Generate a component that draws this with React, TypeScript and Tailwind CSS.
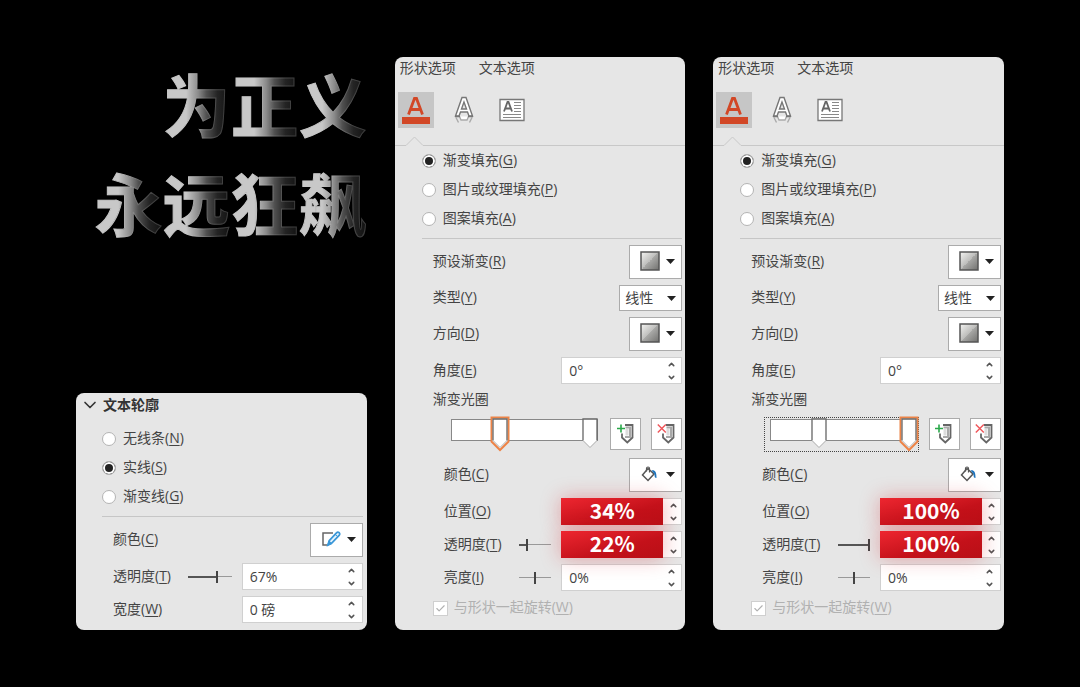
import React, { useState } from 'react';
import { Check, ChevronDown, ChevronUp } from 'lucide-react';

const Label = ({ text, hotkey, htmlFor }: { text: string; hotkey?: string; htmlFor?: string }) => (
  <label htmlFor={htmlFor} className="pb-[2px] leading-5 whitespace-nowrap">
    {text}
    {hotkey && <>(<u className="underline-offset-2">{hotkey}</u>)</>}
  </label>
);

const RadioRow = ({ id, name, text, hotkey, checked }: { id: string; name: string; text: string; hotkey: string; checked?: boolean }) => (
  <div className="flex h-[29px] items-center gap-[7px]">
    <input
      type="radio"
      id={id}
      name={name}
      defaultChecked={checked}
      className="size-[14px] shrink-0 appearance-none rounded-full border border-[#b4b4b4] bg-white checked:bg-[#222] checked:shadow-[inset_0_0_0_2px_white]"
    />
    <Label text={text} hotkey={hotkey} htmlFor={id} />
  </div>
);

const Row = ({ children, indent }: { children: React.ReactNode; indent?: boolean }) => (
  <div className={indent ? 'flex items-center justify-between pl-[22px]' : 'flex items-center justify-between pl-[11px]'}>
    {children}
  </div>
);

const Arrow = () => (
  <svg width="9" height="5" viewBox="0 0 9 5" className="pointer-events-none">
    <path d="M0 0h9L4.5 5z" fill="#222" />
  </svg>
);

const DropButton = ({ label, children }: { label: string; children: React.ReactNode }) => (
  <button type="button" aria-label={label} className="flex h-[34px] w-[53px] items-center justify-between border border-[#ababab] bg-white pr-[6px] pb-[2px] pl-[10px]">
    {children}
    <Arrow />
  </button>
);

const Swatch = ({ id }: { id: string }) => (
  <svg width="20" height="20" viewBox="0 0 20 20">
    <defs>
      <linearGradient id={id} x1="0" y1="0" x2="1" y2="1">
        <stop offset="0" stopColor="#f4f4f2" />
        <stop offset="0.5" stopColor="#bdbdbb" />
        <stop offset="0.5" stopColor="#a9a9a7" />
        <stop offset="1" stopColor="#70706e" />
      </linearGradient>
    </defs>
    <rect x="1" y="1" width="18" height="18" fill={`url(#${id})`} stroke="#555" strokeWidth="1.5" />
  </svg>
);

const PenIcon = () => (
  <svg width="20" height="16" viewBox="0 0 20 16" fill="none">
    <path d="M12 2H2v12h4" stroke="#666" strokeWidth="1.5" />
    <path d="M7 14l1.2-4.4 7.3-7.8c.8-.8 1.8-.9 2.6-.2s.8 1.8 0 2.7l-7.3 7.7z" fill="#e8f4fc" stroke="#3a97d8" strokeWidth="1.8" />
    <path d="M6.5 14.5L8 10l3 2.6zM14 3.2L17 6" fill="#3a97d8" stroke="#3a97d8" />
  </svg>
);

const BucketIcon = () => (
  <svg width="19" height="16" viewBox="0 0 19 16" fill="none">
    <path d="M8 2.5L14 8l-6 6.5L2.500 9z" fill="#fff" stroke="#555" strokeWidth="1.5" />
    <path d="M6.5 5.500v-3c0-2 3-2 3 0v4" stroke="#555" strokeWidth="1.2" />
    <path d="M11.5 4.5c3-.8 5.200 1 5 7.500-1.500 0-2-.8-2-4z" fill="#1e74bd" />
  </svg>
);

const StopIcon = ({ kind }: { kind: 'add' | 'remove' }) => (
  <svg width="20" height="22" viewBox="0 0 20 22" fill="none">
    <path d="M9 2h7.5v12.5l-5.200 5-5.300-5v-4" stroke="#666" strokeWidth="1.8" />
    <path d="M9.5 4.500H14V14H9" stroke="#a8a8a8" strokeWidth="2" />
    <path d="M11 6v6.500" stroke="#ddd" strokeWidth="3" />
    {kind === 'add' ? (
      <path d="M5 1.5v8M1 5.5h8" stroke="#2aa84a" strokeWidth="1.6" />
    ) : (
      <path d="M.8 1.5l8 8M8.8 1.5l-8 8" stroke="#f0555a" strokeWidth="1.4" />
    )}
  </svg>
);

const Spin = ({ id, value, big }: { id: string; value: string; big?: boolean }) => {
  const [text, setText] = useState(value);
  return (
    <div className="flex h-[27px] w-[121px] border border-[#d0d0d0] bg-white">
      <input
        id={id}
        type="text"
        value={text}
        onChange={e => setText(e.target.value)}
        className={
          big
            ? "relative z-10 -my-px -ml-px w-[102px] min-w-0 shrink-0 bg-linear-to-br from-[#ee2630] via-[#c4111a] via-60% to-[#b90f16] pb-px text-center font-['Noto_Sans_CJK_SC',sans-serif] text-[21px] font-bold text-white shadow-[0_0_20px_rgba(215,25,35,0.35)]"
            : 'min-w-0 flex-1 bg-transparent pl-[7px]'
        }
      />
      <div className="flex w-5 shrink-0 flex-col items-center justify-center gap-1 text-[#555]">
        <button type="button" aria-label="增加"><ChevronUp size={9} strokeWidth={4} className="block" /></button>
        <button type="button" aria-label="减少"><ChevronDown size={9} strokeWidth={4} className="block" /></button>
      </div>
    </div>
  );
};

const Range = ({ label, value, wide, filled }: { label: string; value: number; wide?: boolean; filled?: boolean }) => {
  const [pos, setPos] = useState(value);
  return (
    <div className={wide ? 'relative flex h-3 w-11 items-center' : 'relative flex h-3 w-8 items-center'}>
      <div className="h-px w-full bg-[#999]" />
      {filled && <div className="absolute left-0 h-[2px] bg-[#555]" style={{ width: `${pos}%` }} />}
      <input
        type="range"
        aria-label={label}
        min={0}
        max={100}
        value={pos}
        onChange={e => setPos(Number(e.target.value))}
        className="absolute inset-0 h-3 w-full appearance-none bg-transparent [&::-webkit-slider-thumb]:h-3 [&::-webkit-slider-thumb]:w-[2px] [&::-webkit-slider-thumb]:appearance-none [&::-webkit-slider-thumb]:bg-[#444]"
      />
    </div>
  );
};

const GradientStop = ({ at, active }: { at: number; active: boolean }) => (
  <button
    type="button"
    aria-label={`渐变光圈 ${at}%`}
    className="absolute -top-[4px] h-9 w-5"
    style={{ left: `${Math.round(at * 1.37) - 9}px` }}
  >
    <svg width="20" height="36" viewBox="0 0 20 36" fill="none">
      {active && <path d="M1.5 1.5h17v24L10 34l-8.5-8.5z" fill="#fff" stroke="#ec8347" strokeWidth="2" />}
      <path d="M3 3h14v21.5l-7 7-7-7z" fill="#fff" />
      <path d="M3 24.5V3h14v21.5" stroke="#666" strokeWidth="1.3" />
      <path d="M3 24.5l7 7 7-7" stroke="#aaa" />
    </svg>
  </button>
);

const GlyphTabs = () => (
  <div className="mt-[15px] flex gap-3 pl-[3px]">
    <button type="button" aria-label="文本填充与轮廓" className="flex size-9 items-center justify-center bg-[#c6c6c6]">
      <svg width="30" height="30" viewBox="0 0 30 30" fill="none">
        <path d="M7.5 19.5l6-16h2l6 16M10 14.500h9" stroke="#d24726" strokeWidth="2.8" />
        <path d="M1 22h28v7H1z" fill="#d24726" />
      </svg>
    </button>
    <button type="button" aria-label="文字效果" className="flex size-9 items-center justify-center">
      <svg width="20" height="28" viewBox="0 0 20 28" fill="none" strokeWidth="1.4">
        <path d="M1.5 20L8 1.5h4L18.500 20H15l-1.500-4h-7L5 20z" fill="#fff" stroke="#777" />
        <path d="M10 6l-2.500 7h5z" fill="#e6e6e6" stroke="#777" />
        <path d="M2 21.500l2.500 5M18 21.500l-2.500 5M5.500 20.500L7 24h6l1.500-3.500" fill="#fff" stroke="#aaa" />
        <path d="M1 20.500h5M14 20.500h5" stroke="#777" />
      </svg>
    </button>
    <button type="button" aria-label="文本框" className="flex size-9 items-center justify-center">
      <svg width="26" height="24" viewBox="0 0 26 24" fill="none">
        <path d="M1 1.5h24v21H1z" fill="#fff" stroke="#777" strokeWidth="1.3" />
        <path d="M5 13.5L8.500 4h1l3.500 9.500M6.500 10.500h5" stroke="#666" strokeWidth="1.8" />
        <path d="M15 4.500h7M15 7.500h7M15 10.500h7M15 13.500h7M4 16.500h18M4 19.500h18" stroke="#888" />
      </svg>
    </button>
  </div>
);

const FillPanel = ({ id, position, transparency, active }: { id: string; position: string; transparency: number; active: number }) => (
  <section className="overflow-hidden rounded-lg bg-[#e6e6e6] pb-[11px]">
    <nav className="flex h-5 items-center gap-[23px] pl-[5px]">
      <button type="button">形状选项</button>
      <button type="button">文本选项</button>
    </nav>
    <GlyphTabs />
    <div className="mt-2 flex h-[10px] items-end">
      <div className="h-px w-[11px] bg-[#c8c8c8]" />
      <svg width="17" height="10" viewBox="0 0 17 10" fill="none">
        <path d="M0 9.5L8.5 1 17 9.5" stroke="#c8c8c8" />
      </svg>
      <div className="h-px flex-1 bg-[#c8c8c8]" />
    </div>

    <div className="pr-[3px] pl-[27px]">
      <RadioRow id={`${id}-grad`} name={`${id}-fill`} text="渐变填充" hotkey="G" checked />
      <RadioRow id={`${id}-pic`} name={`${id}-fill`} text="图片或纹理填充" hotkey="P" />
      <RadioRow id={`${id}-pat`} name={`${id}-fill`} text="图案填充" hotkey="A" />
      <hr className="mt-[5px] border-[#c6c6c6]" />

      <div className="mt-[6px] flex flex-col gap-[6px]">
        <Row>
          <Label text="预设渐变" hotkey="R" />
          <DropButton label="预设渐变"><Swatch id={`${id}-preset`} /></DropButton>
        </Row>
        <Row>
          <Label text="类型" hotkey="Y" htmlFor={`${id}-type`} />
          <div className="relative flex items-center">
            <select id={`${id}-type`} className="h-[26px] w-[63px] appearance-none border border-[#ababab] bg-white pb-[2px] pl-[5px]">
              <option>线性</option>
              <option>射线</option>
              <option>矩形</option>
            </select>
            <span className="pointer-events-none absolute right-[6px]"><Arrow /></span>
          </div>
        </Row>
        <Row>
          <Label text="方向" hotkey="D" />
          <DropButton label="方向"><Swatch id={`${id}-dir`} /></DropButton>
        </Row>
        <Row>
          <Label text="角度" hotkey="E" htmlFor={`${id}-angle`} />
          <Spin id={`${id}-angle`} value="0°" />
        </Row>
        <div className="flex h-5 items-center pl-[11px]"><Label text="渐变光圈" /></div>
        <div className="flex h-9 items-center justify-end gap-[10px]">
          <div className={active === 1 ? 'h-[35px] w-[155px] border border-dotted border-[#444] pt-px pl-[5px]' : 'h-[35px] w-[155px] border border-transparent pt-px pl-[5px]'}>
            <div className="relative h-[22px] w-[147px] border border-[#888] bg-white">
              <GradientStop at={34} active={active === 0} />
              <GradientStop at={100} active={active === 1} />
            </div>
          </div>
          <button type="button" aria-label="添加渐变光圈" className="flex h-8 w-[31px] items-center justify-center border border-[#ababab] bg-white">
            <StopIcon kind="add" />
          </button>
          <button type="button" aria-label="删除渐变光圈" className="flex h-8 w-[31px] items-center justify-center border border-[#ababab] bg-white">
            <StopIcon kind="remove" />
          </button>
        </div>
        <Row indent>
          <Label text="颜色" hotkey="C" />
          <DropButton label="颜色"><BucketIcon /></DropButton>
        </Row>
        <Row indent>
          <Label text="位置" hotkey="O" htmlFor={`${id}-pos`} />
          <Spin id={`${id}-pos`} value={position} big />
        </Row>
        <Row indent>
          <Label text="透明度" hotkey="T" htmlFor={`${id}-alpha`} />
          <div className="flex items-center gap-[10px]">
            <Range label="透明度" value={transparency} filled />
            <Spin id={`${id}-alpha`} value={`${transparency}%`} big />
          </div>
        </Row>
        <Row indent>
          <Label text="亮度" hotkey="I" htmlFor={`${id}-light`} />
          <div className="flex items-center gap-[10px]">
            <Range label="亮度" value={50} />
            <Spin id={`${id}-light`} value="0%" />
          </div>
        </Row>
        <div className="flex h-[22px] items-center gap-[6px] pl-[11px] text-[#b1b1b1]">
          <span className="relative flex size-[15px] items-center justify-center">
            <input id={`${id}-rotate`} type="checkbox" defaultChecked disabled className="absolute inset-0 appearance-none border border-[#cfcfcf] bg-white" />
            <Check size={11} strokeWidth={2.5} className="relative" />
          </span>
          <Label text="与形状一起旋转" hotkey="W" htmlFor={`${id}-rotate`} />
        </div>
      </div>
    </div>
  </section>
);

const OutlinePanel = () => (
  <section className="rounded-lg bg-[#e6e6e6] pb-[7px]">
    <button type="button" className="flex h-[23px] items-center gap-[3px] pl-1 font-bold text-[#333]">
      <ChevronDown size={20} strokeWidth={2} />
      文本轮廓
    </button>
    <div className="mt-2 pr-1 pl-[26px]">
      <RadioRow id="line-none" name="line" text="无线条" hotkey="N" />
      <RadioRow id="line-solid" name="line" text="实线" hotkey="S" checked />
      <RadioRow id="line-grad" name="line" text="渐变线" hotkey="G" />
      <hr className="mt-[5px] border-[#c6c6c6]" />
      <div className="mt-[6px] flex flex-col gap-[6px]">
        <Row>
          <Label text="颜色" hotkey="C" />
          <DropButton label="颜色"><PenIcon /></DropButton>
        </Row>
        <Row>
          <Label text="透明度" hotkey="T" htmlFor="line-alpha" />
          <div className="flex items-center gap-[10px]">
            <Range label="透明度" value={67} wide filled />
            <Spin id="line-alpha" value="67%" />
          </div>
        </Row>
        <Row>
          <Label text="宽度" hotkey="W" htmlFor="line-width" />
          <Spin id="line-width" value="0 磅" />
        </Row>
      </div>
    </div>
  </section>
);

// every glyph carries its own fade, so each one is a separate span
const Headline = () => (
  <h1 className="-mt-1 text-right font-['Noto_Sans_CJK_SC',sans-serif] text-[68px] leading-[99px] font-bold">
    {['为正义', '永远狂飙'].map(line => (
      <span key={line} className="flex justify-end">
        {line.split('').map(ch => (
          <span
            key={ch}
            className="bg-[linear-gradient(to_right,#c8c8c8_34%,#8a8a8a_52%,#505050_64%,#242424_80%,#101010_100%)] bg-clip-text text-transparent [-webkit-text-stroke:1px_rgba(200,200,200,0.22)]"
          >
            {ch}
          </span>
        ))}
      </span>
    ))}
  </h1>
);

export default function App() {
  return (
    <main className="flex min-h-screen items-center bg-black px-[76px] font-['Open_Sans','Noto_Sans_CJK_SC',sans-serif] text-[14px] text-[#444]">
      <div className="grid w-full grid-cols-3 gap-7">
        <div className="flex flex-col justify-between">
          <Headline />
          <OutlinePanel />
        </div>
        <FillPanel id="first" position="34%" transparency={22} active={0} />
        <FillPanel id="last" position="100%" transparency={100} active={1} />
      </div>
    </main>
  );
}
